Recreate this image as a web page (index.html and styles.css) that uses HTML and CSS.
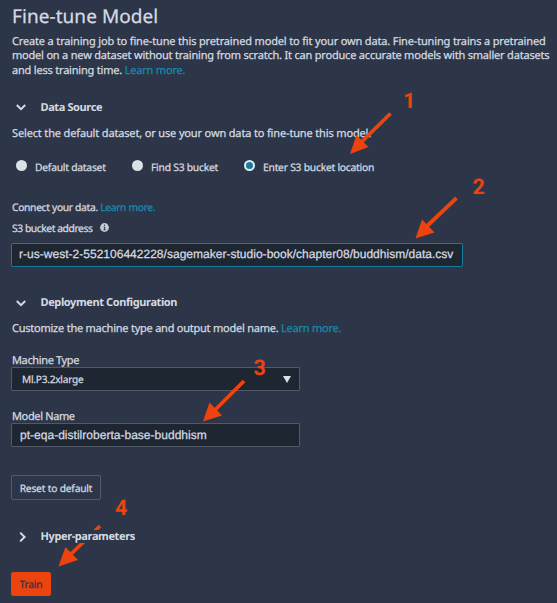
FILE: index.html
```html
<!DOCTYPE html>
<html lang="en">
<head>
<meta charset="utf-8">
<title>Fine-tune Model</title>
<link rel="stylesheet" href="styles.css">
</head>
<body>
<main class="panel">
  <h1 class="title">Fine-tune Model</h1>
  <p class="intro"><span class="first">Create a training job to fine-tune this pretrained model to fit your own data. Fine-tuning trains a pretrained</span><br>model on a new dataset without training from scratch. It can produce accurate models with smaller datasets<br>and less training time. <a>Learn more.</a></p>

  <section class="source">
    <h2 class="heading"><svg class="chevron" viewBox="0 0 12 12"><path d="M1.8 4 6 8.1 10.2 4"/></svg><span>Data Source</span></h2>
    <p class="text pick">Select the default dataset, or use your own data to fine-tune this model.</p>
    <div class="radios">
      <label class="radio"><i class="dot"></i><span>Default dataset</span></label>
      <label class="radio"><i class="dot"></i><span>Find S3 bucket</span></label>
      <label class="radio"><i class="dot on"></i><span>Enter S3 bucket location</span></label>
    </div>
    <p class="text connect">Connect your data. <a>Learn more.</a></p>
    <div class="label address"><span>S3 bucket address</span><svg class="info" viewBox="0 0 9 9"><circle cx="4.5" cy="4.5" r="4.4"/><path d="M4.5 1.7v1.2M3.7 4h1v2.8M3.5 6.8h2"/></svg></div>
    <div class="field wide"><span>r-us-west-2-552106442228/sagemaker-studio-book/chapter08/buddhism/data.csv</span></div>
  </section>

  <section class="deploy">
    <h2 class="heading"><svg class="chevron" viewBox="0 0 12 12"><path d="M1.8 4 6 8.1 10.2 4"/></svg><span>Deployment Configuration</span></h2>
    <p class="text customize">Customize the machine type and output model name. <a>Learn more.</a></p>
    <div class="label machine">Machine Type</div>
    <div class="field select"><span>Ml.P3.2xlarge</span><i class="caret"></i></div>
    <div class="label model">Model Name</div>
    <div class="field name"><span>pt-eqa-distilroberta-base-buddhism</span></div>
    <div class="button reset">Reset to default</div>
  </section>

  <h2 class="heading hyper"><svg class="chevron" viewBox="0 0 12 12"><path d="M4.2 1.6 8.6 6 4.2 10.4"/></svg><span>Hyper-parameters</span></h2>
  <div class="button train">Train</div>

  <svg class="notes" viewBox="0 0 557 603">
    <path class="shaft" d="M390.500 113.500 360 143.500M456.500 198 425 228M244 381 213 412M100 526 69 556"/>
    <path d="M350 154 356.500 135 368.500 147ZM415.500 238.500 422 219.500 434.500 232.500ZM203 421.500 209.500 402.500 222 415.500ZM58.500 566.500 65.500 547 78 560Z"/>
    <text x="403" y="108">1</text>
    <text x="472.500" y="194">2</text>
    <text x="253.500" y="374.500">3</text>
    <text x="115" y="515">4</text>
  </svg>
</main>
</body>
</html>
```
FILE: styles.css
```css
* { box-sizing: border-box; }
body {
  margin: 0;
  background: #2d3648;
  color: #d5dbe1;
  font-family: "Noto Sans", "Open Sans", sans-serif;
  font-size: 11px;
  letter-spacing: -.2px;
  text-rendering: geometricPrecision;
  -webkit-text-stroke: .25px;
}
.panel {
  position: relative;
  width: 557px;
  height: 603px;
  padding: 3px 0 0 12px;
  overflow: hidden;
  white-space: nowrap;
}
h1, h2, p { margin: 0; }
a { color: #168bad; }
.title {
  height: 31px;
  line-height: 27px;
  font-size: 19px;
  font-weight: 400;
  letter-spacing: .06px;
}
.intro { line-height: 14.5px; height: 43.5px; padding-top: .7px; }
.first { letter-spacing: -.155px; }
.heading {
  display: flex;
  align-items: center;
  height: 15px;
  line-height: 15px;
  font-size: 11px;
  font-weight: 700;
  letter-spacing: -.39px;
  -webkit-text-stroke: 0;
}
.heading span { padding-top: 1px; margin-left: -.5px; }
.chevron {
  width: 12px;
  height: 12px;
  margin: 1px 14px 0 3px;
  fill: none;
  stroke: #d5dbe1;
  stroke-width: 2;
}
.source { padding-top: 21.5px; }
.text, .label { height: 15px; line-height: 17px; }
.label { letter-spacing: -.36px; }
.pick { margin-top: 10.5px; letter-spacing: -.15px; }
.radios { display: grid; grid-template-columns: 116px 112px auto; margin-top: 20px; height: 15px; }
.radio { display: flex; gap: 8px; padding-left: 4px; line-height: 17px; font-size: 10.3px; letter-spacing: -.23px; }
.dot { width: 11px; height: 11px; border-radius: 50%; background: #dce1e6; flex: none; }
.on { background: #147d9f; border: 2px solid #e2edf2; }
.connect { margin-top: 25px; font-size: 10.3px; letter-spacing: -.33px; }
.address { display: flex; gap: 8px; margin-top: 6.5px; font-size: 10.3px; letter-spacing: -.43px; }
.info { width: 9px; height: 9px; margin-top: 2px; fill: #c4cbd3; stroke: #2d3648; stroke-width: 1; }
.info circle { stroke: none; }
.field {
  display: flex;
  align-items: center;
  width: 289px;
  height: 24px;
  margin-left: -1px;
  background: #1d2631;
  border: 1px solid #515966;
  border-radius: 1px;
}
.wide { width: 452px; margin-top: 7px; border-color: #147d9f; border-radius: 2px; padding: 0 0 2px 7px; }
.wide, .name { font-family: "Liberation Sans", sans-serif; font-size: 12px; letter-spacing: .02px; }
.deploy { padding-top: 27.5px; }
.customize { margin-top: 10.5px; letter-spacing: -.235px; }
.machine { margin-top: 17px; }
.select { justify-content: space-between; padding: 0 8px 0 10px; font-size: 10.1px; letter-spacing: -.23px; }
.caret { border: solid transparent; border-width: 7px 4.5px 0; border-top-color: #dce1e6; }
.model { margin-top: 17px; }
.name { padding-left: 8px; }
.button {
  display: flex;
  align-items: center;
  justify-content: center;
  width: 90px;
  height: 25px;
  margin-left: -1px;
  border: 1px solid #555b66;
  border-radius: 2px;
  font-size: 10.2px;
}
.reset { margin-top: 28px; letter-spacing: -.17px; }
.hyper { margin-top: 29px; }
.hyper .chevron { margin: 0 13px 0 4px; }
.hyper span { position: relative; z-index: 2; height: 13px; line-height: 12px; background: #2d3648; }
.train { width: 40px; height: 24px; margin-top: 28px; background: #ec430f; border-color: #ec430f; color: #2d3648; }
.notes { position: absolute; left: 0; top: 0; z-index: 1; width: 557px; height: 603px; fill: #ec430f; }
.shaft { stroke: #ec430f; stroke-width: 3.8; }
.notes text { font: 700 21.5px Roboto, sans-serif; letter-spacing: 0; }
```
